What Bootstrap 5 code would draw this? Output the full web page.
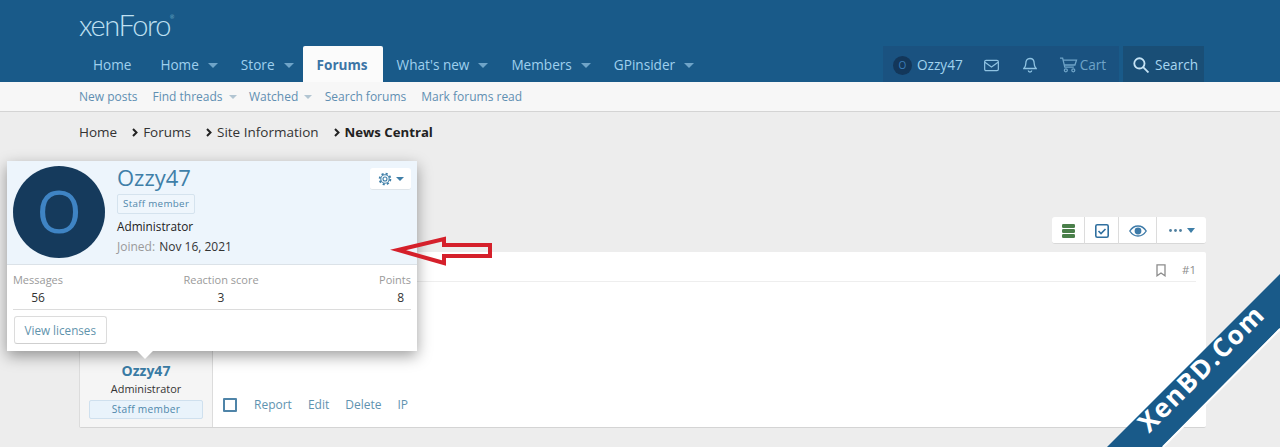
<!DOCTYPE html>
<html lang="en">
<head>
<meta charset="utf-8">
<title>News Central</title>
<link href="https://cdn.jsdelivr.net/npm/bootstrap@5.3.0/dist/css/bootstrap.min.css" rel="stylesheet">
<style>
html,body{height:447px;overflow:hidden}
body{background:#ededed;font-family:"Open Sans","Noto Sans",sans-serif;font-size:13px;color:#222;position:relative}
a{text-decoration:none}
.xf-wrap{width:1127px;margin-left:79px}
.xf-head{background:#195a89;height:82px}
.xf-logo{height:46px;font-family:Lato,sans-serif;font-weight:300;font-size:29px;line-height:49px;color:#bfe0f2;letter-spacing:-1.400px}
.xf-logo sup{font-size:5px;top:-17px;vertical-align:baseline;position:relative}
.xf-tabs{height:36px;font-size:13.6px;color:#9fd0ee}
.xf-tab{display:flex;align-items:center;gap:9px;height:36px;padding:2px 15px 0 14px;color:#9fd0ee}
.xf-tab.has-menu{padding-right:9px}
.xf-tab.is-on{background:#fbfbfb;color:#3d75a6;font-weight:700;border-radius:2px 2px 0 0}
.xf-caret{width:0;height:0;border:5px solid transparent;border-top:5px solid #6fa4c8;border-bottom:0}
.xf-tools{margin-left:auto;height:36px;margin-right:2px;color:#a0d2ee}
.xf-toolgrp{background:#1a5280;display:flex;align-items:center;height:36px;padding:2px 0 0 10px;margin-right:4px;width:236px}
.xf-srch{background:#194e76;display:flex;align-items:center;gap:6px;height:36px;padding:2px 0 0 10px;width:81px;color:#a8d6f0;font-size:13.6px}
.xf-mini{width:19px;height:19px;border-radius:50%;background:#13375a;color:#3c7db8;font-size:10px;display:flex;align-items:center;justify-content:center;margin-right:5px}
.xf-sub{height:30px;background:#f7f7f7;border-bottom:1px solid #d4d4d4;font-size:12px;color:#5f8fb2}
.xf-sub .xf-wrap{display:flex;align-items:center;height:29px;padding-top:1px}
.xf-sublink{display:flex;align-items:center;gap:6px;margin-right:15px;color:#5f8fb2}
.xf-sublink.has-menu{margin-right:12.500px}
.xf-sublink .xf-caret{border-width:4px 4px 0;border-top-color:#b2c5d2}
.xf-crumbs{height:41px;display:flex;align-items:center;font-size:13.500px;color:#333}
.xf-chev{margin:0 5px 0 15px;flex:none}
.xf-crumbs strong{color:#222;font-size:13.200px}
.xf-toolbar{display:flex;justify-content:flex-end;margin-top:64px;height:27px}
.xf-tbar{display:flex;background:#fff;border-bottom:1px solid #d8d8d8;border-radius:3px;height:27px}
.xf-tbar>span{display:flex;align-items:center;justify-content:center;border-left:1px solid #dcdcdc;height:27px}
.xf-tbar>span:first-child{border-left:0}
.xf-msg{margin-top:8px;height:176px;background:#fff;border-bottom:1px solid #d4d4d4;display:flex;border-radius:2px}
.xf-user{width:134px;background:#f5f5f5;border-right:1px solid #dcdcdc;border-left:1px solid #dcdcdc;text-align:center;display:flex;flex-direction:column;justify-content:flex-end;padding:0 9px 8px;flex:none}
.xf-uname{font-weight:700;font-size:14px;color:#3a7ca5;line-height:19px}
.xf-urole{font-size:10.900px;line-height:18px;color:#333}
.xf-ubadge{background:#e9f3fb;border:1px solid #cfe0ee;color:#4f87ab;font-size:10.200px;height:19px;line-height:17px;border-radius:2px;margin-top:2px;letter-spacing:.3px}
.xf-body{flex:1;display:flex;flex-direction:column;padding:9px 10px 13px 10px}
.xf-attr{display:flex;justify-content:flex-end;align-items:center;gap:16px;height:21px;padding-bottom:2px;border-bottom:1px solid #eee;font-size:11.500px;color:#8c8c8c;margin-bottom:auto}
.xf-acts{display:flex;align-items:center;color:#5f93b0;font-size:12px;height:18px}
.xf-acts a{color:inherit;margin-right:16px}
.xf-chk{width:14px;height:14px;border:2px solid #4f84a8;border-radius:1px;margin-right:17px}
.xf-pop{position:absolute;left:7px;top:161px;width:410px;height:190px;background:#fff;box-shadow:0 5px 14px rgba(0,0,0,.38);z-index:5}
.xf-pophead{height:104px;background:#edf5fc;border-bottom:1px solid #dbe2e8;display:flex;padding:5px 6px 0}
.xf-ava{width:92px;height:92px;border-radius:50%;background:#153a5c;color:#3f84c4;font-size:58px;line-height:90px;text-align:center;flex:none;margin-right:12px}
.xf-pname{font-size:22px;line-height:23px;color:#3f7fa8}
.xf-pbadge{display:inline-block;border:1px solid #d5e3ee;background:#eff6fc;color:#4f87ab;font-size:9.800px;line-height:18px;padding:0 5px;border-radius:2px;margin-top:5px;letter-spacing:.3px}
.xf-prole{font-size:11.800px;line-height:20px;margin-top:2px}
.xf-pjoin{font-size:12px;line-height:20px;color:#9a9a9a;margin-top:1px}
.xf-pjoin b{font-weight:400;color:#333;margin-left:1px}
.xf-gear{margin-left:auto;width:41px;height:22px;background:#fff;border-bottom:1px solid #dfe5ea;border-radius:3px;display:flex;align-items:center;justify-content:center;gap:4px;margin-top:2px}
.xf-gear .xf-caret{border-width:4px 4px 0;border-top-color:#3f7fa8}
.xf-stats{display:flex;justify-content:space-between;margin:0 6px;padding:7px 0 4px;border-bottom:1px solid #dcdcdc;height:45px;font-size:11px;color:#9a9a9a;line-height:15px}
.xf-stats>div{display:flex;flex-direction:column}
.xf-stats b{font-weight:400;color:#333;font-size:12px;line-height:19px;margin-top:1px}
.xf-viewbtn{display:inline-block;margin:6px 0 0 7px;height:28px;line-height:27px;padding:0 9.500px;border:1px solid #dcdcdc;border-bottom-color:#cfcfcf;border-radius:3px;color:#5f93ac;font-size:11.700px;background:#fff}
.xf-tip{position:absolute;left:128px;top:189px;width:20px;height:9px;overflow:hidden}
.xf-tip::after{content:"";display:block;width:14px;height:14px;background:#fff;transform:rotate(45deg);margin:-8px 0 0 3px}
.xf-over{position:absolute;pointer-events:none;z-index:6}
</style>
</head>
<body>
<header class="xf-head">
  <div class="xf-wrap">
    <div class="xf-logo">xenForo<sup>®</sup></div>
    <nav class="xf-tabs d-flex">
      <a class="xf-tab" href="#">Home</a>
      <a class="xf-tab has-menu" href="#">Home <i class="xf-caret"></i></a>
      <a class="xf-tab has-menu" href="#">Store <i class="xf-caret"></i></a>
      <a class="xf-tab is-on" href="#">Forums</a>
      <a class="xf-tab has-menu" href="#">What's new <i class="xf-caret"></i></a>
      <a class="xf-tab has-menu" href="#">Members <i class="xf-caret"></i></a>
      <a class="xf-tab has-menu" href="#">GPinsider <i class="xf-caret"></i></a>
      <div class="xf-tools d-flex">
        <div class="xf-toolgrp">
          <span class="xf-mini">O</span><span>Ozzy47</span>
          <svg style="margin-left:21px" width="15" height="13" viewBox="0 0 16 13" fill="none" stroke="#8fc3e2" stroke-width="1.300"><rect x=".7" y="1" width="14.600" height="11" rx="1.500"/><path d="M1 3l7 5 7-5"/></svg>
          <svg style="margin-left:24px" width="14" height="17" viewBox="0 0 14 17" fill="none" stroke="#8fc3e2" stroke-width="1.300"><path d="M7 1.500c-3 0-4.200 2.300-4.200 5 0 3-1.300 4-2 5h12.400c-.7-1-2-2-2-5 0-2.700-1.200-5-4.200-5zM5.300 13.500c0 2 3.400 2 3.400 0"/></svg>
          <svg style="margin-left:22px" width="19" height="16" viewBox="0 0 17 15" fill="none" stroke="#6fa4c8" stroke-width="1.200"><path d="M.5 1h2.500l2 8.500h8.500M3.500 3h12.500l-1.500 4.500H4.500"/><circle cx="6" cy="12.500" r="1.400"/><circle cx="13" cy="12.500" r="1.400"/></svg>
          <span style="color:#6fa4c8;margin-left:2px">Cart</span>
        </div>
        <a class="xf-srch" href="#"><svg width="16" height="16" viewBox="0 0 15 15" fill="none" stroke="#c5e3f5" stroke-width="1.700"><circle cx="6" cy="6" r="4.800"/><path d="M9.500 9.500l5 5"/></svg>Search</a>
      </div>
    </nav>
  </div>
</header>
<div class="xf-sub">
  <div class="xf-wrap">
    <a class="xf-sublink" href="#">New posts</a>
    <a class="xf-sublink has-menu" href="#">Find threads <i class="xf-caret"></i></a>
    <a class="xf-sublink has-menu" href="#">Watched <i class="xf-caret"></i></a>
    <a class="xf-sublink" href="#">Search forums</a>
    <a class="xf-sublink" href="#">Mark forums read</a>
  </div>
</div>
<main class="xf-wrap">
  <div class="xf-crumbs">
    <span>Home</span>
    <svg class="xf-chev" width="6" height="9" viewBox="0 0 6 9" fill="none" stroke="#222" stroke-width="2"><path d="M1 1l3.500 3.500L1 8"/></svg>
    <span>Forums</span>
    <svg class="xf-chev" width="6" height="9" viewBox="0 0 6 9" fill="none" stroke="#222" stroke-width="2"><path d="M1 1l3.500 3.500L1 8"/></svg>
    <span>Site Information</span>
    <svg class="xf-chev" width="6" height="9" viewBox="0 0 6 9" fill="none" stroke="#222" stroke-width="2"><path d="M1 1l3.500 3.500L1 8"/></svg>
    <strong>News Central</strong>
  </div>
  <div class="xf-toolbar">
    <div class="xf-tbar">
      <span style="width:32px"><svg width="13" height="14" viewBox="0 0 13 14" fill="#4a7f4a"><rect width="13" height="4" rx="1.300"/><rect y="5" width="13" height="4" rx="1.300"/><rect y="10" width="13" height="4" rx="1.300"/></svg></span>
      <span style="width:34px"><svg width="14" height="14" viewBox="0 0 14 14" fill="none" stroke="#2f6f9f" stroke-width="1.600"><rect x=".8" y=".8" width="12.400" height="12.400" rx="1.500"/><path d="M3.500 7l2.500 2.500 4.500-4.500"/></svg></span>
      <span style="width:38px"><svg width="18" height="12" viewBox="0 0 18 12"><path fill="none" stroke="#3d7aa8" stroke-width="1.400" d="M.8 6C3 2.500 5.800 1 9 1s6 1.500 8.200 5C15 9.500 12.200 11 9 11S3 9.500.8 6z"/><circle cx="9" cy="6" r="3.400" fill="#3d7aa8"/></svg></span>
      <span style="width:50px;gap:5px"><svg width="13" height="3" viewBox="0 0 13 3" fill="#4f7f9f"><circle cx="1.500" cy="1.500" r="1.400"/><circle cx="6.500" cy="1.500" r="1.400"/><circle cx="11.500" cy="1.500" r="1.400"/></svg><i class="xf-caret" style="border-width:5px 4px 0;border-top-color:#3f7fa8"></i></span>
    </div>
  </div>
  <article class="xf-msg">
    <div class="xf-user">
      <div class="xf-uname">Ozzy47</div>
      <div class="xf-urole">Administrator</div>
      <div class="xf-ubadge">Staff member</div>
    </div>
    <div class="xf-body">
      <div class="xf-attr">
        <svg width="10" height="13" viewBox="0 0 10 13" fill="none" stroke="#8c8c8c" stroke-width="1.300"><path d="M1 .8h8v11L5 9l-4 2.800z"/></svg><span>#1</span>
      </div>
      <div class="xf-acts">
        <span class="xf-chk"></span><a href="#">Report</a><a href="#">Edit</a><a href="#">Delete</a><a href="#">IP</a>
      </div>
    </div>
  </article>
</main>

<aside class="xf-pop">
  <div class="xf-pophead">
    <div class="xf-ava">O</div>
    <div>
      <div class="xf-pname">Ozzy47</div>
      <span class="xf-pbadge">Staff member</span>
      <div class="xf-prole">Administrator</div>
      <div class="xf-pjoin">Joined: <b>Nov 16, 2021</b></div>
    </div>
    <span class="xf-gear"><svg width="14" height="14" viewBox="0 0 14 14" fill="none" stroke="#3f7fa8"><circle cx="7" cy="7" r="2" stroke-width="1.100"/><circle cx="7" cy="7" r="4.200" stroke-width="1.100"/><circle cx="7" cy="7" r="5.400" stroke-width="1.800" stroke-dasharray="2.120 2.120"/></svg><i class="xf-caret"></i></span>
  </div>
  <div class="xf-stats">
    <div class="align-items-center" style="width:50px"><span>Messages</span><b>56</b></div>
    <div class="align-items-center"><span>Reaction score</span><b>3</b></div>
    <div class="align-items-end"><span>Points</span><b style="padding-right:7px">8</b></div>
  </div>
  <a class="xf-viewbtn" href="#">View licenses</a>
  <div class="xf-tip"></div>
</aside>

<svg class="xf-over" style="left:390px;top:232px" width="106" height="36" viewBox="0 0 106 36" fill="none" stroke="#d5202b" stroke-width="4"><path d="M8 18L54 7v6h46v11H54v7z"/></svg>

<svg class="xf-over" style="left:1090px;top:260px" width="190" height="187" viewBox="0 0 190 187">
  <path d="M190 14 L17 187 H72 L190 68z" fill="#195a89"/>
  <path d="M190 69 L73 187" stroke="#fff" stroke-width="2" fill="none"/>
  <text x="0" y="0" transform="translate(113 110) rotate(-45)" text-anchor="middle" dominant-baseline="middle" font-family="Open Sans, sans-serif" font-weight="700" font-size="26" letter-spacing="1.600" fill="#fff">XenBD.Com</text>
</svg>
</body>
</html>
